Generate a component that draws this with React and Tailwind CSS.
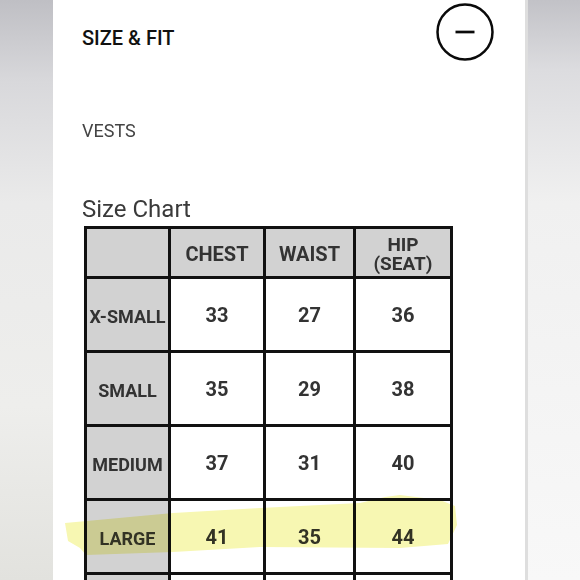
import React from 'react';

const rows = [
    { size: 'X-SMALL', chest: 33, waist: 27, hip: 36 },
    { size: 'SMALL', chest: 35, waist: 29, hip: 38 },
    { size: 'MEDIUM', chest: 37, waist: 31, hip: 40 },
    { size: 'LARGE', chest: 41, waist: 35, hip: 44 },
];

const MinusCircle = () => (
    <svg width="60" height="60" viewBox="0 0 60 60" className="shrink-0">
        <circle cx="30" cy="30" r="27.5" fill="none" stroke="#0a0a0a" strokeWidth="2.5" />
        <line x1="20.5" y1="30" x2="39.5" y2="30" stroke="#0a0a0a" strokeWidth="2.7" />
    </svg>
);

const SizeTable = () => (
    <div className="ml-[2px] w-[369px] grid grid-cols-[81px_92px_87px_94px] auto-rows-[71px] grid-rows-[47px] gap-[3px] p-[3px] bg-[#111] text-[#333] font-bold">
        {/* Header */}
        <div className="bg-[#d2d2d2]" />
        <div className="bg-[#d2d2d2] flex items-center justify-center text-[20px] leading-none pt-[2px]">CHEST</div>
        <div className="bg-[#d2d2d2] flex items-center justify-center text-[20px] leading-none pt-[2px]">WAIST</div>
        <div className="bg-[#d2d2d2] flex items-center justify-center pt-[2px]">
            <span className="text-center text-[19px] leading-[19px]">
                HIP
                <br />
                (SEAT)
            </span>
        </div>

        {rows.map((r) => (
            <React.Fragment key={r.size}>
                <div className="bg-[#d2d2d2] flex items-center justify-center text-[18px] leading-none pt-[4px]">{r.size}</div>
                <div className="bg-white flex items-center justify-center text-[20px] leading-none pt-[1px]">{r.chest}</div>
                <div className="bg-white flex items-center justify-center text-[20px] leading-none pt-[1px]">{r.waist}</div>
                <div className="bg-white flex items-center justify-center text-[20px] leading-none pt-[1px]">{r.hip}</div>
            </React.Fragment>
        ))}

        {/* next row, cut off by the screen */}
        <div className="bg-[#d2d2d2]" />
        <div className="bg-white" />
        <div className="bg-white" />
        <div className="bg-white" />
    </div>
);

export default function App() {
    return (
        <div className="relative h-[580px] w-[580px] overflow-hidden flex font-['Roboto',sans-serif]">
            {/* Left backdrop */}
            <div className="w-[53px] shrink-0 bg-[linear-gradient(to_bottom,#bfbfc4_0%,#d8d8db_14%,#eaeaea_35%,#eeeeec_70%,#e2e2de_100%)]" />

            {/* Panel */}
            <div className="w-[472px] shrink-0 bg-white flex flex-col">
                <div className="h-[2px] bg-[#6e6e75]" />
                <div className="pl-[29px] pr-[30px] flex flex-col">
                    <div className="mt-[2px] flex justify-between items-start">
                        <h2 className="mt-[26px] text-[20px] leading-[20px] font-medium text-[#111]">SIZE &amp; FIT</h2>
                        <MinusCircle />
                    </div>

                    <p className="mt-[60px] text-[18px] leading-[18px] text-[#444]">VESTS</p>

                    <h3 className="mt-[57px] text-[24px] leading-[24px] text-[#3a3a3a]">Size Chart</h3>

                    <div className="mt-[5px]">
                        <SizeTable />
                    </div>
                </div>
            </div>

            {/* Right edge + backdrop */}
            <div className="w-[3px] shrink-0 bg-[#dedede]" />
            <div className="flex-1 bg-[linear-gradient(to_bottom,#c2c2c7_0%,#dcdcdf_12%,#f0f0f0_35%,#f8f8f8_100%)]" />

            {/* Highlighter stroke */}
            <svg className="absolute inset-0 pointer-events-none mix-blend-multiply" width="580" height="580" viewBox="0 0 580 580">
                <path
                    d="M65,523 L173,513 L260,508 L360,503 L385,497 L400,495 L440,500 L455,506 L457,525 L448,544 L400,548 L260,547 L173,552 L86,555 L80,548 L68,541 Z"
                    fill="#f7f7b2"
                />
            </svg>
        </div>
    );
}
